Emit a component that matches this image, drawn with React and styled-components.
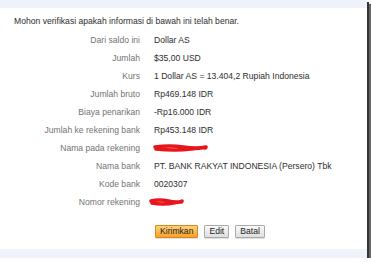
import React from "react";
import styled, { createGlobalStyle } from "styled-components";

const Global = createGlobalStyle`
  html, body {
    margin: 0;
    padding: 0;
    background: #fff;
  }
  body {
    font-family: "Liberation Sans", Arial, sans-serif;
  }
`;

const Frame = styled.div`
  width: 367px;
  height: 258px;
  display: flex;
  flex-direction: column;
  background: #fff;
  box-shadow: 2px 2px 0 #333, 4px 4px 1px #666;
`;

const Band = styled.div`
  height: ${(p) => p.h}px;
  background: #eef3fa;
  flex-shrink: 0;
`;

const Body = styled.div`
  flex: 1;
  padding-top: 6px;
`;

const Title = styled.div`
  font-size: 8.6px;
  line-height: 14px;
  color: #2e2e2e;
  padding-left: 14px;
`;

const Table = styled.div`
  display: grid;
  grid-template-columns: 140px 1fr;
  column-gap: 14px;
  grid-auto-rows: 18px;
  margin-top: 3px;
  font-size: 8.6px;
  align-items: center;
`;

const Label = styled.div`
  text-align: right;
  color: #737373;
  white-space: nowrap;
`;

const Value = styled.div`
  color: #2e2e2e;
  white-space: nowrap;
  display: flex;
  align-items: center;
`;

const Actions = styled.div`
  display: flex;
  gap: 6px;
  margin: 14px 0 0 155px;
`;

const Button = styled.button`
  font-family: "Liberation Sans", Arial, sans-serif;
  font-size: 8.6px;
  height: 13px;
  line-height: 11px;
  padding: 0 4px;
  color: #222;
  border: 1px solid ${(p) => (p.primary ? "#d08a1e" : "#a9a9a9")};
  background: ${(p) =>
    p.primary
      ? "linear-gradient(#ffd27a, #f8a12a)"
      : "linear-gradient(#fafafa, #dedede)"};
  border-radius: 1px;
  box-shadow: 0 1px 0 rgba(0, 0, 0, 0.12);
  cursor: pointer;
`;

const Scribble = ({ w, offset }) => (
  <svg width={w} height="8" viewBox={`0 0 ${w} 8`} style={{ marginLeft: offset }}>
    <path
      d={`M2 3 Q${w * 0.3} 1 ${w * 0.55} 3 T${w - 2} 3 M3 5 Q${w * 0.4} 7 ${w * 0.7} 5 T${w - 3} 4`}
      stroke="#e8161b"
      strokeWidth="3.5"
      fill="none"
      strokeLinecap="round"
    />
  </svg>
);

const rows = [
  ["Dari saldo ini", "Dollar AS"],
  ["Jumlah", "$35,00 USD"],
  ["Kurs", "1 Dollar AS = 13.404,2 Rupiah Indonesia"],
  ["Jumlah bruto", "Rp469.148 IDR"],
  ["Biaya penarikan", "-Rp16.000 IDR"],
  ["Jumlah ke rekening bank", "Rp453.148 IDR"],
  ["Nama pada rekening", <Scribble w={55} offset={-1} />],
  ["Nama bank", "PT. BANK RAKYAT INDONESIA (Persero) Tbk"],
  ["Kode bank", "0020307"],
  ["Nomor rekening", <Scribble w={35} offset={-5} />],
];

export default function App() {
  return (
    <>
      <Global />
      <Frame>
        <Band h={8} />
        <Body>
          <Title>Mohon verifikasi apakah informasi di bawah ini telah benar.</Title>
          <Table>
            {rows.map(([label, value], i) => (
              <React.Fragment key={i}>
                <Label>{label}</Label>
                <Value>{value}</Value>
              </React.Fragment>
            ))}
          </Table>
          <Actions>
            <Button primary>Kirimkan</Button>
            <Button>Edit</Button>
            <Button>Batal</Button>
          </Actions>
        </Body>
        <Band h={9} />
      </Frame>
    </>
  );
}
